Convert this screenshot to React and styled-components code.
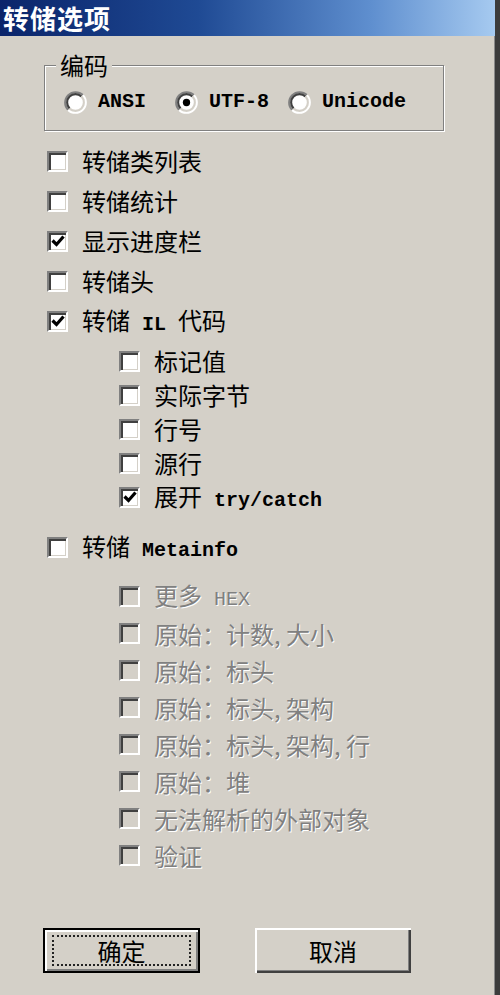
import React from 'react';
import styled, { createGlobalStyle } from 'styled-components';

const Global = createGlobalStyle`
  html, body { margin: 0; padding: 0; background: #d4d0c8; }
  body { font-family: "Noto Sans CJK SC", "Noto Sans", sans-serif; }
  * { box-sizing: border-box; }
`;

const Window = styled.div`
  width: 500px;
  height: 995px;
  background: #d4d0c8;
  border-right: 5px solid #3c3c3c;
  box-shadow: inset -1px 0 0 #8a8a8a;
  display: flex;
  flex-direction: column;
  overflow: hidden;
`;

const TitleBar = styled.div`
  height: 36px;
  flex: none;
  display: flex;
  align-items: center;
  padding-left: 3px;
  background: linear-gradient(90deg, #0a246a 0%, #1f4a94 40%, #5f8fcf 75%, #a6caf0 100%);
  color: #fff;
  font-weight: 700;
  font-size: 26px;
  letter-spacing: 1px;
  line-height: 1;
`;

const Group = styled.fieldset`
  margin: 17px 0 0 44px;
  width: 400px;
  padding: 13px 0 16px 19px;
  border: 1px solid #808080;
  box-shadow: inset 1px 1px 0 #fff, 1px 1px 0 #fff;
  min-inline-size: auto;
`;

const Legend = styled.legend`
  margin-left: -8px;
  padding: 0 4px;
  font-size: 24px;
  line-height: 24px;
  background: #d4d0c8;
  color: #000;
`;

const RadioRow = styled.div`
  display: flex;
  align-items: center;
  height: 24px;
`;

const RadioOption = styled.label`
  display: flex;
  align-items: center;
  gap: 11px;
  margin-right: ${p => p.$space || 0}px;
`;

const Mono = styled.span`
  font-family: "Liberation Mono", "DejaVu Sans Mono", monospace;
  font-size: 20px;
  font-weight: ${p => (p.$light ? 400 : 700)};
  line-height: 1;
`;

const List = styled.div`
  display: flex;
  flex-direction: column;
  margin-top: ${p => p.$top || 0}px;
`;

const Row = styled.div`
  height: ${p => p.$h}px;
  display: flex;
  align-items: center;
  gap: 14px;
  padding-left: ${p => p.$indent}px;
`;

const Box = styled.span`
  width: 21px;
  height: 21px;
  flex: none;
  background: ${p => (p.$disabled ? '#d4d0c8' : '#fff')};
  border: 2px solid;
  border-color: #808080 #fff #fff #808080;
  box-shadow: inset 2px 2px 0 #404040, inset -1px -1px 0 #d4d0c8;
  display: flex;
  align-items: center;
  justify-content: center;
`;

const Label = styled.span`
  font-size: 24px;
  line-height: 1;
  white-space: nowrap;
  color: ${p => (p.$disabled ? '#808080' : '#000')};
  text-shadow: ${p => (p.$disabled ? '1px 1px 0 #fff' : 'none')};
`;

const Buttons = styled.div`
  display: flex;
  gap: 55px;
  padding-left: 43px;
  margin-top: 54px;
`;

const Button = styled.button`
  width: ${p => p.$w}px;
  height: 45px;
  padding: 0;
  background: #d4d0c8;
  font-family: "Noto Sans CJK SC", sans-serif;
  font-size: 24px;
  color: #000;
  display: flex;
  align-items: center;
  justify-content: center;
  border: ${p => (p.$default ? '2px solid #000' : '0')};
  box-shadow: ${p =>
    p.$default
      ? 'inset 2px 2px 0 #fff, inset -2px -2px 0 #808080'
      : 'inset 2px 2px 0 #fff, inset -2px -2px 0 #404040, inset -3px -3px 0 #808080'};
`;

const Focus = styled.span`
  flex: 1;
  align-self: stretch;
  margin: 5px 7px;
  border: 2px dotted #222;
  display: flex;
  align-items: center;
  justify-content: center;
  line-height: 1;
`;

const Radio = ({ checked }) => (
  <svg width="23" height="23" viewBox="0 0 22 22">
    <circle cx="11" cy="11" r="9" fill="#fff" />
    <path d="M3.93 18.07 A10 10 0 0 1 18.07 3.93" stroke="#808080" strokeWidth="2" fill="none" />
    <path d="M3.93 18.07 A10 10 0 0 0 18.07 3.93" stroke="#fff" strokeWidth="2" fill="none" />
    <path d="M5.34 16.66 A8 8 0 0 1 16.66 5.34" stroke="#404040" strokeWidth="2" fill="none" />
    <path d="M5.34 16.66 A8 8 0 0 0 16.66 5.34" stroke="#d4d0c8" strokeWidth="2" fill="none" />
    {checked && <circle cx="11" cy="11" r="3.5" fill="#000" />}
  </svg>
);

const Check = ({ checked, disabled, children, indent, h }) => (
  <Row $indent={indent} $h={h}>
    <Box $disabled={disabled}>
      {checked && (
        <svg width="14" height="12" viewBox="0 0 14 12">
          <path d="M1.5 5.5 L5.5 9.5 L12.5 1.5" stroke="#000" strokeWidth="3.2" fill="none" />
        </svg>
      )}
    </Box>
    <Label $disabled={disabled}>{children}</Label>
  </Row>
);

export default function App() {
  return (
    <>
      <Global />
      <Window>
        <TitleBar>转储选项</TitleBar>
        <Group>
          <Legend>编码</Legend>
          <RadioRow>
            <RadioOption $space={29}>
              <Radio />
              <Mono>ANSI</Mono>
            </RadioOption>
            <RadioOption $space={19}>
              <Radio checked />
              <Mono>UTF-8</Mono>
            </RadioOption>
            <RadioOption>
              <Radio />
              <Mono>Unicode</Mono>
            </RadioOption>
          </RadioRow>
        </Group>

        <List $top={10}>
          <Check indent={47} h={40}>转储类列表</Check>
          <Check indent={47} h={40}>转储统计</Check>
          <Check indent={47} h={40} checked>显示进度栏</Check>
          <Check indent={47} h={40}>转储头</Check>
          <Check indent={47} h={40} checked>
            转储<Mono> IL </Mono>代码
          </Check>
        </List>

        <List $top={3}>
          <Check indent={119} h={34}>标记值</Check>
          <Check indent={119} h={34}>实际字节</Check>
          <Check indent={119} h={34}>行号</Check>
          <Check indent={119} h={34}>源行</Check>
          <Check indent={119} h={34} checked>
            展开<Mono> try/catch</Mono>
          </Check>
        </List>

        <List $top={13}>
          <Check indent={47} h={40}>
            转储<Mono> Metainfo</Mono>
          </Check>
        </List>

        <List $top={11}>
          <Check indent={119} h={37} disabled>
            更多<Mono $light> HEX</Mono>
          </Check>
          <Check indent={119} h={37} disabled>原始：计数, 大小</Check>
          <Check indent={119} h={37} disabled>原始：标头</Check>
          <Check indent={119} h={37} disabled>原始：标头, 架构</Check>
          <Check indent={119} h={37} disabled>原始：标头, 架构, 行</Check>
          <Check indent={119} h={37} disabled>原始：堆</Check>
          <Check indent={119} h={37} disabled>无法解析的外部对象</Check>
          <Check indent={119} h={37} disabled>验证</Check>
        </List>

        <Buttons>
          <Button $w={157} $default>
            <Focus>确定</Focus>
          </Button>
          <Button $w={156}>取消</Button>
        </Buttons>
      </Window>
    </>
  );
}
